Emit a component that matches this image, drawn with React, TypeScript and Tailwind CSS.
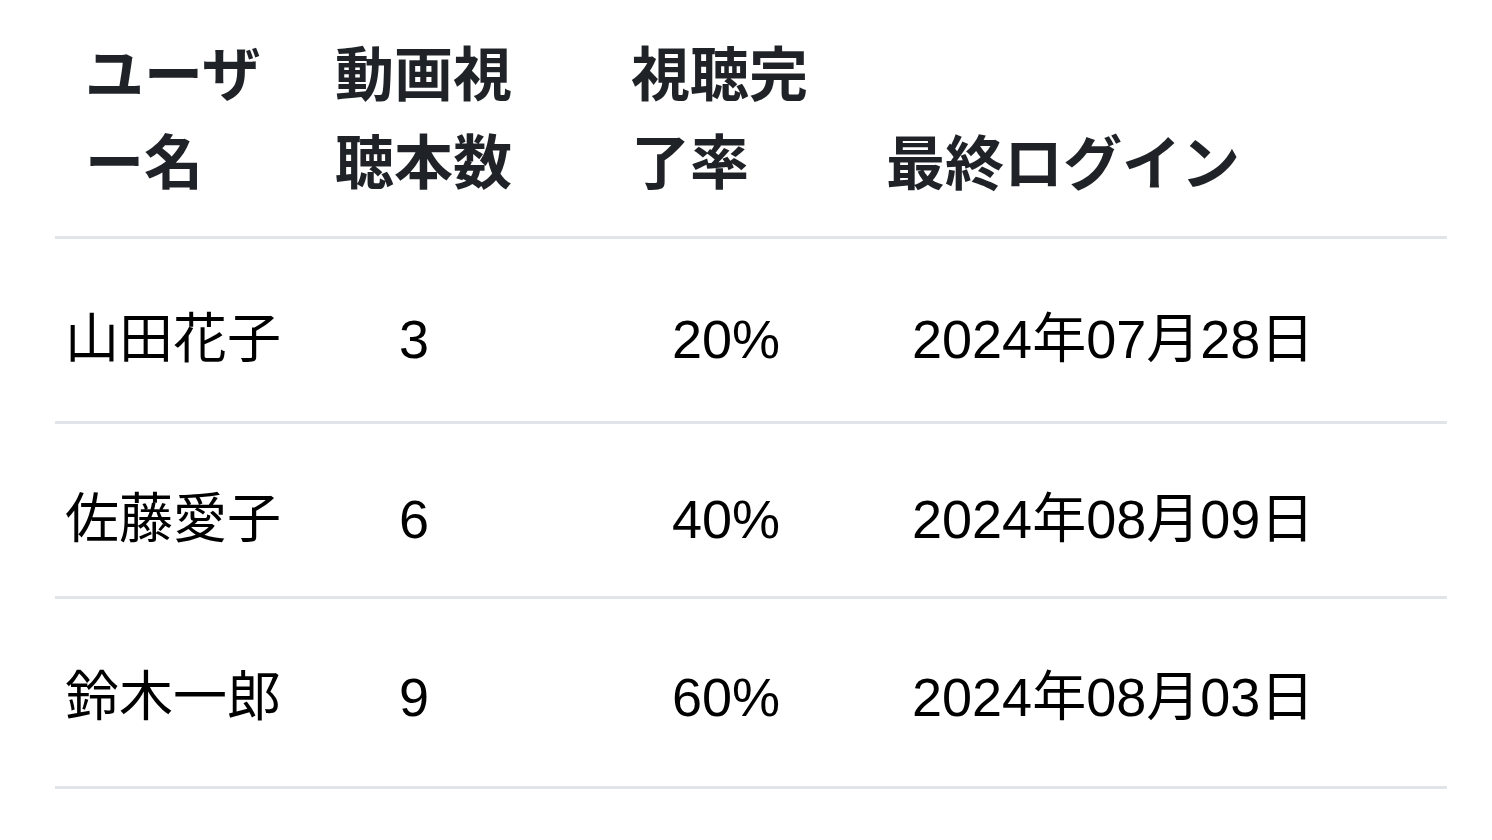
import React from 'react';

type Row = { name: string; views: number; rate: string; lastLogin: string; pt: string; h: string };

const rows: Row[] = [
  { name: '山田花子', views: 3, rate: '20%', lastLogin: '2024年07月28日', pt: 'pt-[60px]', h: 'h-[185px]' },
  { name: '佐藤愛子', views: 6, rate: '40%', lastLogin: '2024年08月09日', pt: 'pt-[55px]', h: 'h-[175px]' },
  { name: '鈴木一郎', views: 9, rate: '60%', lastLogin: '2024年08月03日', pt: 'pt-[58px]', h: 'h-[190px]' },
];

const grid = 'grid grid-cols-[255px_280px_260px_1fr]';

export default function App() {
  return (
    <div className="min-h-screen bg-white">
      <div className="ml-[55px] w-[1392px]">
        {/* ヘッダー */}
        <div
          className={`${grid} h-[239px] pt-[27px] border-b-[3px] border-[#e1e4e8] text-[59px] leading-[88px] font-bold text-[#1f2328] font-['Noto_Sans_CJK_JP',sans-serif]`}
        >
          <div className="pl-[30px]">
            <span className="block">ユーザ</span>
            <span className="block">ー名</span>
          </div>
          <div className="pl-[25px]">
            <span className="block">動画視</span>
            <span className="block">聴本数</span>
          </div>
          <div className="pl-[41px]">
            <span className="block">視聴完</span>
            <span className="block">了率</span>
          </div>
          <div className="pl-[36px] flex flex-col justify-end pb-[32px]">
            <span className="block">最終ログイン</span>
          </div>
        </div>

        {/* 行 */}
        {rows.map((r) => (
          <div
            key={r.name}
            className={`${grid} ${r.h} ${r.pt} border-b-[3px] border-[#e1e4e8] text-[54px] leading-[81px] text-black font-['Liberation_Sans','Noto_Sans_CJK_JP',sans-serif]`}
          >
            <div className="pl-[10px]">{r.name}</div>
            <div className="pl-[89px]">{r.views}</div>
            <div className="pl-[82px]">{r.rate}</div>
            <div className="pl-[62px] whitespace-nowrap">{r.lastLogin}</div>
          </div>
        ))}
      </div>
    </div>
  );
}
